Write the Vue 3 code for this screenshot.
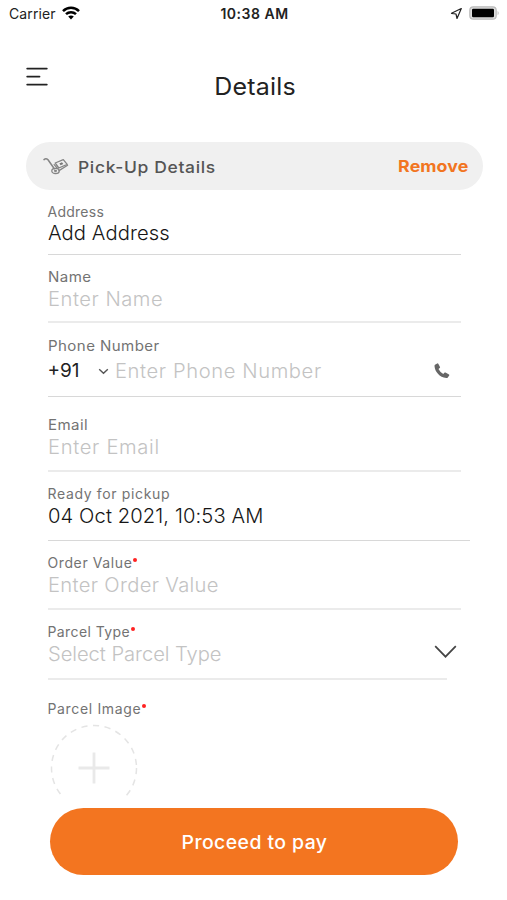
<script setup>
const fields = [
  { id: 'address', label: 'Address', value: 'Add Address', filled: true },
  { id: 'name', label: 'Name', value: 'Enter Name' },
  { id: 'phone', label: 'Phone Number', value: 'Enter Phone Number', code: '+91' },
  { id: 'email', label: 'Email', value: 'Enter Email' },
  { id: 'ready', label: 'Ready for pickup', value: '04 Oct 2021, 10:53 AM', filled: true },
  { id: 'order', label: 'Order Value', value: 'Enter Order Value', required: true },
  { id: 'type', label: 'Parcel Type', value: 'Select Parcel Type', required: true, select: true },
]
</script>

<template>
  <main class="screen">
    <div class="status">
      <div class="carrier">
        <span>Carrier</span>
        <svg width="18" height="14" viewBox="0 0 18 14">
          <g fill="none" stroke="#000" stroke-width="2.5">
            <path d="M1 5.1C5.5.6 12.500.6 17 5.100" />
            <path d="M4 8.200C6.800 5.500 11.200 5.500 14 8.200" />
          </g>
          <path d="M6.200 10.500C7.800 9.100 10.200 9.100 11.800 10.500L9 13.400Z" />
        </svg>
      </div>
      <span class="clock">10:38 AM</span>
      <div class="power">
        <svg width="13" height="13" viewBox="0 0 13 13">
          <path d="M11.300 1.500L1.500 6.300L6 7L7 11.500Z" fill="none" stroke="#222" stroke-width="1.200" stroke-linejoin="round" />
        </svg>
        <svg width="31" height="14" viewBox="0 0 31 14">
          <rect x=".8" y=".8" width="26.400" height="12.400" rx="3.500" fill="#ddd" stroke="#bbb" stroke-width="1.200" />
          <rect x="3" y="2.800" width="22" height="8.400" rx="1.200" />
          <path d="M28.600 4.700Q30.800 7 28.600 9.300Z" fill="#bbb" />
        </svg>
      </div>
    </div>

    <header class="header">
      <svg class="menu" width="22" height="20" viewBox="0 0 22 20">
        <path d="M1.200 1.600H20.800M1.200 9.600H13.500M1.200 17.600H20.800" stroke="#222" stroke-width="1.800" stroke-linecap="round" />
      </svg>
      <h1>Details</h1>
    </header>

    <section class="banner">
      <svg width="26" height="18" viewBox="0 0 26 18">
        <g fill="none" stroke="#858585" stroke-width="1.300" stroke-linejoin="round" stroke-linecap="round">
          <path d="M1 2.600Q3 .8 5 2.800L11.300 11.800" stroke-width="1.500" />
          <ellipse cx="12.500" cy="13.900" rx="3.700" ry="2.600" />
          <path d="M16 13.600L24.600 8.300" />
          <path d="M12.200 6L20.300 2.600L24.200 7.400L15.800 11Z" />
          <path d="M11.200 7.600L14.200 11.200" />
        </g>
        <path d="M16.300 6.400L19 5.200L20.300 7L17.600 8.200Z" fill="#777" />
        <ellipse cx="12.500" cy="13.900" rx="1.600" ry="1.100" fill="#858585" />
      </svg>
      <h2>Pick-Up Details</h2>
      <span class="remove">Remove</span>
    </section>

    <section class="form">
      <div v-for="f in fields" :key="f.id" class="field" :class="f.id">
        <div class="label"><span class="label-text">{{ f.label }}</span><i v-if="f.required" class="star"></i></div>
        <div class="row">
          <template v-if="f.code">
            <span class="code">{{ f.code }}</span>
            <svg class="code-arrow" width="11" height="7" viewBox="0 0 11 7">
              <path d="M1.200 1.200L5.500 5.200L9.800 1.200" fill="none" stroke="#555" stroke-width="1.400" />
            </svg>
          </template>
          <span class="value" :class="{ filled: f.filled }">{{ f.value }}</span>
          <svg v-if="f.code" class="end" width="16" height="16" viewBox="0 0 16 16">
            <path d="M1 1.700L3.200.4Q3.900.1 4.300.8L6 4Q6.300 4.600 5.700 5.100L4.500 6.100Q6.200 9.600 9.300 11L10.300 9.800Q10.800 9.200 11.500 9.600L15 11.400Q15.600 11.800 15.200 12.400L13.800 14.600Q13.300 15.200 12.300 15.100C5.500 14.200.8 8.700.5 3Q.5 2.100 1 1.700Z" fill="#666" />
          </svg>
          <svg v-if="f.select" class="end" width="23" height="14" viewBox="0 0 23 14">
            <path d="M1.200 1.200L11.500 11.700L21.800 1.200" fill="none" stroke="#444" stroke-width="1.700" />
          </svg>
        </div>
      </div>

      <div class="image-field">
        <div class="label"><span class="label-text">Parcel Image</span><i class="star"></i></div>
        <svg class="upload" width="90" height="73" viewBox="0 0 90 73">
          <circle cx="45" cy="45" r="42.500" fill="none" stroke="#e4e4e4" stroke-width="1.500" stroke-dasharray="6.200 5.500" />
          <path d="M29.500 45H60.500M45 29.500V60.500" stroke="#e9e9e9" stroke-width="2.800" />
        </svg>
      </div>
    </section>

    <button class="pay"><span>Proceed to pay</span></button>
  </main>
</template>

<style>
body { background: #fff; }
</style>

<style scoped>
.screen { width: 507px; height: 900px; overflow: hidden; background: #fff; font-family: Inter, "Noto Sans", sans-serif; color: #222; display: flex; flex-direction: column; }
h1, h2 { margin: 0; font-weight: 400; }
span, h1, h2 { white-space: nowrap; }
svg { display: block; flex: none; }
.status { height: 28px; display: grid; grid-template-columns: 1fr auto 1fr; align-items: center; padding: 0 7px 2px 9px; box-sizing: border-box; font-size: 14px; }
.carrier { display: flex; align-items: center; gap: 6px; letter-spacing: .1px; }
.clock { font-weight: 600; letter-spacing: .5px; }
.power { display: flex; justify-content: flex-end; align-items: center; gap: 6px; }
.header { height: 114px; box-sizing: border-box; padding: 39px 25px 0 26px; display: grid; grid-template-columns: 22px 1fr 20px; align-items: start; }
.header h1 { text-align: center; font-size: 24px; line-height: 40px; letter-spacing: .2px; font-weight: 400; transform: scaleX(1.04); }
.banner { flex: none; height: 48px; width: 457px; box-sizing: border-box; margin-left: 26px; padding: 0 15px 0 17px; border-radius: 24px; background: #f0f0f0; display: flex; align-items: center; }
.banner h2 { margin-left: 9px; padding-top: 2px; font-size: 16.500px; font-weight: 500; color: #555; letter-spacing: .6px; transform: scaleX(1.06); transform-origin: left; }
.remove { margin-left: auto; font-size: 16.500px; font-weight: 700; color: #f27521; letter-spacing: .1px; transform: scaleX(1.075); transform-origin: right; }
.form { flex: none; height: 606px; overflow: hidden; padding-left: 47.5px; }
.field { width: 413px; height: 69px; box-sizing: border-box; padding-top: 13px; border-bottom: 2px solid #ebebeb; }
.label { height: 18px; display: flex; font-size: 14px; line-height: 18px; color: #737373; letter-spacing: .6px; }
.label-text { transform-origin: left; }
.star { width: 4px; height: 4px; border-radius: 50%; background: #f22; margin: 4px 0 0 1px; }
.row { display: flex; align-items: center; height: 22px; margin-top: 2px; font-size: 19.400px; line-height: 22px; }
.value { color: #c3c3c3; font-weight: 300; letter-spacing: .4px; transform: scaleX(1.04); transform-origin: left; }
.value.filled { color: #161616; font-weight: 350; }
.address { height: 65px; border-bottom: 1px solid #d8d8d8; }
.address .label { letter-spacing: .25px; }
.address .row { margin-top: 1px; }
.address .value { letter-spacing: .1px; }
.name { height: 68px; }
.name .label-text, .phone .label-text, .email .label-text { letter-spacing: .4px; transform: scaleX(1.075); }
.name .value { letter-spacing: .5px; }
.phone { height: 74px; padding-top: 14px; border-bottom: 1px solid #d8d8d8; }
.phone .row { margin-top: 5px; }
.phone .value { letter-spacing: .58px; }
.code { width: 50px; font-size: 19px; }
.code-arrow { margin-right: 6px; }
.end { margin-left: auto; }
.phone .end { margin-right: 11px; }
.email { height: 75px; padding-top: 19px; }
.email .value { letter-spacing: .65px; }
.ready { width: 422px; border-bottom: 1px solid #d8d8d8; }
.ready .label { letter-spacing: .65px; }
.ready .value { letter-spacing: .1px; }
.order .value { letter-spacing: .32px; }
.type { width: 399px; height: 70px; }
.type .label { letter-spacing: .4px; }
.type .value { letter-spacing: -.05px; }
.type .end { margin-right: -10px; position: relative; top: -2px; }
.image-field { padding-top: 20px; }
.image-field .label { letter-spacing: .65px; }
.upload { margin: 5px 0 0 1px; }
.pay { flex: none; width: 408px; height: 67px; margin: 12px 0 0 50px; padding: 0; border: 0; border-radius: 34px; background: #f37520; color: #fff; font: 500 18.500px Inter, sans-serif; letter-spacing: .4px; }
.pay span { display: inline-block; transform: scaleX(1.05); }
</style>
